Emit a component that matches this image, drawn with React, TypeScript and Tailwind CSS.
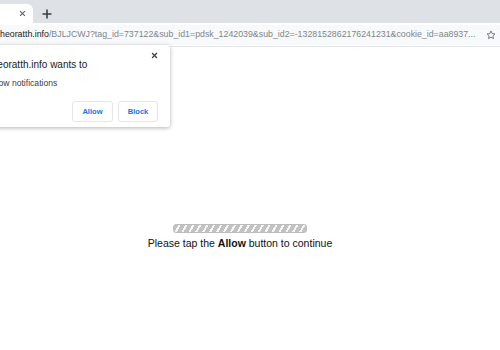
import React from 'react'

const App = () => {
  return (
    <div className="relative w-[500px] h-[350px] overflow-hidden bg-white font-['Liberation_Sans',Arial,sans-serif]">
      {/* Tab strip */}
      <div className="flex h-[23px] items-end bg-[#dee1e6]">
        <div className="relative flex h-[19px] w-[33px] items-center justify-end rounded-tr-[6px] bg-white pr-[7px]">
          <svg width="7" height="7" viewBox="0 0 10 10" className="text-[#5f6368]">
            <path d="M1.5 1.5 L8.5 8.5 M8.5 1.5 L1.5 8.5" stroke="currentColor" strokeWidth="1.6" />
          </svg>
        </div>
        <div className="flex h-[19px] w-[28px] items-center justify-center">
          <svg width="10" height="10" viewBox="0 0 10 10" className="text-[#3c4043]">
            <path d="M5 0.5 V9.5 M0.5 5 H9.5" stroke="currentColor" strokeWidth="1.6" />
          </svg>
        </div>
      </div>

      {/* Toolbar / omnibox */}
      <div className="flex h-[24px] items-center border-b border-[#e3e5e8] bg-white">
        <div className="flex h-[20px] flex-1 items-center overflow-hidden bg-[#f8f9fa] pr-[4px]">
          <span className="whitespace-nowrap text-[8.8px] text-[#202124]">heoratth.info</span>
          <span className="whitespace-nowrap text-[8.8px] text-[#80868b]">
            /BJLJCWJ?tag_id=737122&amp;sub_id1=pdsk_1242039&amp;sub_id2=-1328152862176241231&amp;cookie_id=aa8937...
          </span>
          <div className="flex-1" />
          <svg width="10" height="10" viewBox="0 0 24 24" className="shrink-0 text-[#5f6368]">
            <path
              d="M12 2.5l2.9 6.1 6.6.8-4.9 4.6 1.3 6.6L12 17.3l-5.9 3.3 1.3-6.6-4.9-4.6 6.6-.8z"
              fill="none"
              stroke="currentColor"
              strokeWidth="2"
              strokeLinejoin="round"
            />
          </svg>
        </div>
      </div>

      {/* Page */}
      <div className="flex flex-col items-center pr-[20px] pt-[177px]">
        <div className="h-[9px] w-[134px] rounded-[3px] border border-[#bdbdbd] bg-[repeating-linear-gradient(-60deg,#c2c2c2_0_4px,#f6f6f6_4px_6px)]" />
        <p className="mt-[3px] whitespace-nowrap text-[10.5px] text-[#111]">
          Please tap the <span className="font-bold">Allow</span> button to continue
        </p>
      </div>

      {/* Notification permission popup */}
      <div className="absolute left-[-20px] top-[45px] h-[82px] w-[190px] rounded-[3px] bg-white pl-[9px] pr-[12px] shadow-[0_1px_4px_rgba(0,0,0,0.3)]">
        <div className="flex items-start justify-between pt-[12px]">
          <span className="whitespace-nowrap text-[10px] text-[#202124]">theoratth.info wants to</span>
          <svg width="7" height="7" viewBox="0 0 10 10" className="mt-[-5px] text-[#3c4043]">
            <path d="M1.5 1.5 L8.5 8.5 M8.5 1.5 L1.5 8.5" stroke="currentColor" strokeWidth="1.8" />
          </svg>
        </div>
        <div className="mt-[5px] whitespace-nowrap text-[8.6px] text-[#3c4043]">Allow notifications</div>
        <div className="mt-[11px] flex justify-end gap-[5px]">
          <button className="flex h-[21px] w-[41px] items-center justify-center rounded-[3px] border border-[#e4e6e9] bg-white text-[7.6px] font-semibold text-[#1a73e8]">
            Allow
          </button>
          <button className="flex h-[21px] w-[40px] items-center justify-center rounded-[3px] border border-[#e4e6e9] bg-white text-[7.6px] font-semibold text-[#1a73e8]">
            Block
          </button>
        </div>
      </div>
    </div>
  )
}

export default App
